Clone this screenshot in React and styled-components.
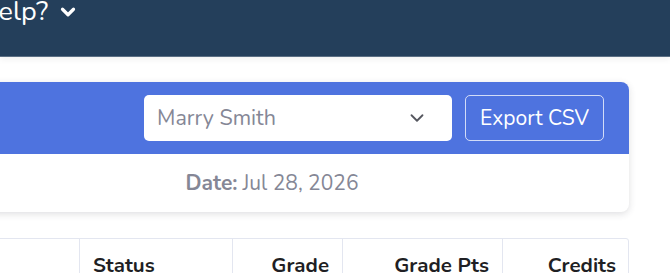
import { ChevronDown } from 'lucide-react';
import styled, { createGlobalStyle } from 'styled-components';

const GlobalStyle = createGlobalStyle`
  html, body {
    margin: 0;
    padding: 0;
    background: #ffffff;
    overflow: hidden;
    font-family: "Nunito", Lato, "Noto Sans", sans-serif;
  }
`;

const Navbar = styled.nav`
  height: 56px;
  background-color: #243f5b;
  border-bottom: 1px solid #5b6f84;
  box-shadow: 0 3px 6px rgba(0, 0, 0, 0.05);
  display: flex;
  align-items: flex-start;
  overflow: hidden;
`;

const NavLink = styled.a`
  display: flex;
  align-items: center;
  gap: 9px;
  margin-left: -22px;
  margin-top: -3px;
  color: #ffffff;
  font-size: 27px;
  line-height: 30px;
  text-decoration: none;
`;

const Main = styled.main`
  display: flex;
  flex-direction: column;
  gap: 26px;
  margin: 25px 41px 0 -85px;
`;

const Card = styled.section`
  background-color: #ffffff;
  border-radius: 8px;
  box-shadow: 0 2px 7px rgba(58, 59, 69, 0.16);
  overflow: hidden;
`;

const CardHeader = styled.div`
  display: flex;
  justify-content: flex-end;
  align-items: center;
  gap: 13px;
  padding: 13px 25px;
  background-color: #4e73df;
`;

const Select = styled.div`
  display: flex;
  align-items: center;
  justify-content: space-between;
  box-sizing: border-box;
  width: 308px;
  height: 46px;
  padding: 0 24px 0 13px;
  background-color: #ffffff;
  border-radius: 5px;
  color: #858796;
  font-size: 21.5px;
`;

const Button = styled.button`
  box-sizing: border-box;
  width: 139px;
  height: 46px;
  background: transparent;
  border: 1px solid rgba(255, 255, 255, 0.75);
  border-radius: 5px;
  color: #ffffff;
  font-family: inherit;
  font-size: 21px;
`;

const DateRow = styled.div`
  height: 58px;
  display: flex;
  align-items: center;
  justify-content: center;
  color: #858796;
  font-size: 21px;

  b {
    font-weight: 700;
    margin-right: 5px;
  }
`;

const Table = styled.div`
  display: grid;
  grid-template-columns: 163px 153px 110px 160px 127px;
  border: 1px solid #e3e6f0;
  border-radius: 3px;
  overflow: hidden;
`;

const HeadCell = styled.div`
  padding: 12px 13px 10px;
  border-left: ${p => (p.$first ? 'none' : '1px solid #e3e6f0')};
  text-align: ${p => p.$align || 'right'};
  color: #1f1f24;
  font-size: 20.5px;
  font-weight: 700;
  white-space: nowrap;
`;

const columns = [
  { label: 'Course', align: 'left', hidden: true },
  { label: 'Status', align: 'left' },
  { label: 'Grade' },
  { label: 'Grade Pts' },
  { label: 'Credits' },
];

const App = () => {
  return (
    <>
      <GlobalStyle />
      <Navbar>
        <NavLink>
          Help?
          <ChevronDown size={22} strokeWidth={3.5} />
        </NavLink>
      </Navbar>
      <Main>
        <Card>
          <CardHeader>
            <Select>
              Marry Smith
              <ChevronDown size={22} strokeWidth={2} color="#55575f" />
            </Select>
            <Button>Export CSV</Button>
          </CardHeader>
          <DateRow>
            <b>Date:</b> Jul 28, 2026
          </DateRow>
        </Card>
        <Table>
          {columns.map((c, i) => (
            <HeadCell key={c.label} $first={i === 0} $align={c.align}>
              {c.hidden ? '' : c.label}
            </HeadCell>
          ))}
        </Table>
      </Main>
    </>
  );
};

export default App;
